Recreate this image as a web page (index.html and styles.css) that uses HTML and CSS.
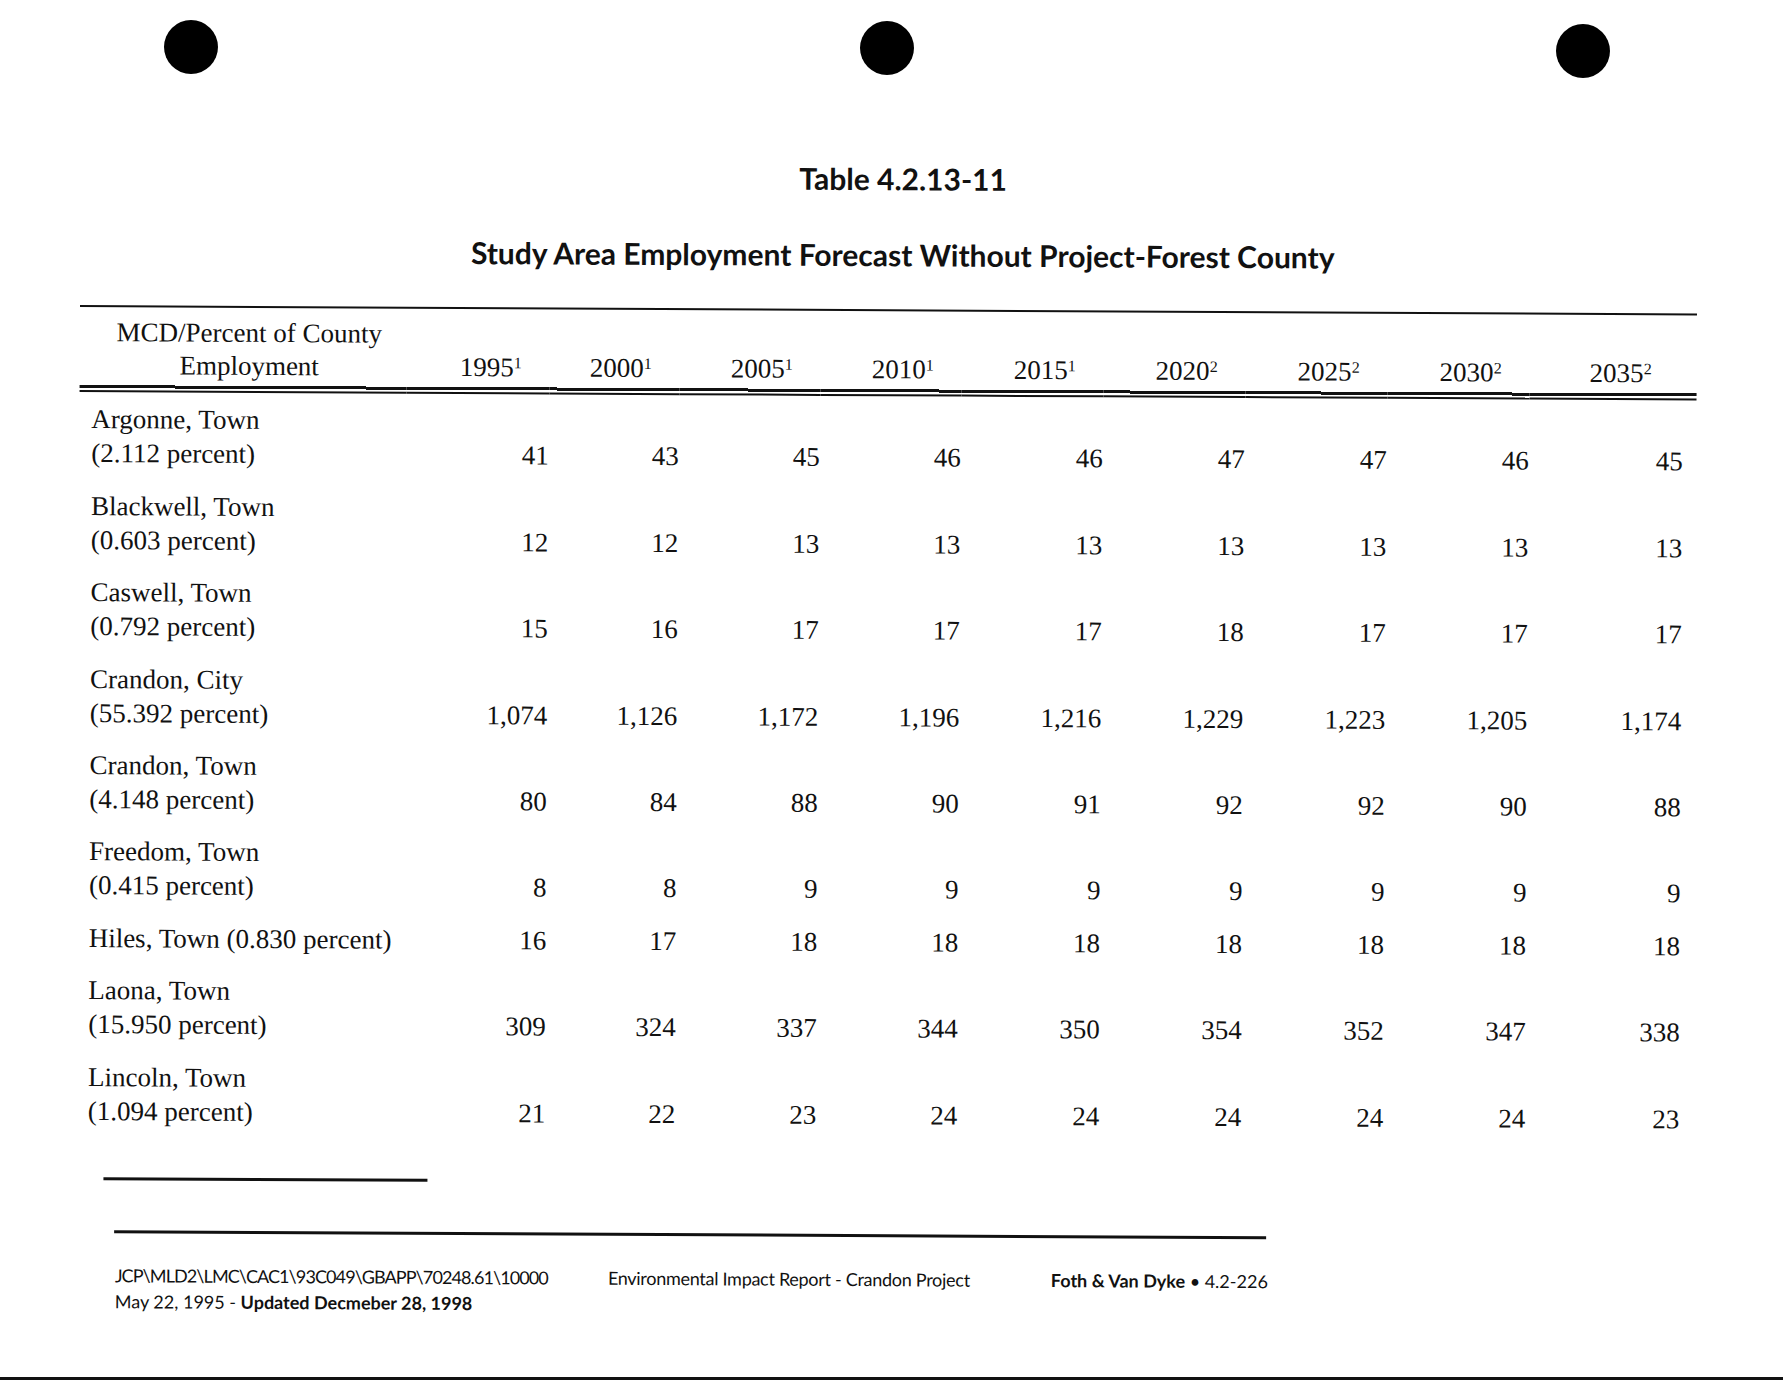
FILE: index.html
```html
<!DOCTYPE html>
<html lang="en">
<head>
<meta charset="utf-8">
<title>Table 4.2.13-11</title>
<link rel="stylesheet" href="styles.css">
</head>
<body>
<div class="holes"><span class="hole"></span><span class="hole"></span><span class="hole"></span></div>
<div class="sheet">
  <h1 class="title">Table 4.2.13-11</h1>
  <h2 class="subtitle">Study Area Employment Forecast Without Project-Forest County</h2>
  <table class="forecast">
    <colgroup>
      <col class="c-name"><col class="c-1"><col class="c-2"><col class="c-3"><col class="c-4"><col class="c-5"><col class="c-6"><col class="c-7"><col class="c-8"><col class="c-9">
    </colgroup>
    <thead>
      <tr>
        <th class="name-head">MCD/Percent of County<br>Employment</th>
        <th>1995<sup>1</sup></th><th>2000<sup>1</sup></th><th>2005<sup>1</sup></th><th>2010<sup>1</sup></th><th>2015<sup>1</sup></th><th>2020<sup>2</sup></th><th>2025<sup>2</sup></th><th>2030<sup>2</sup></th><th class="last">2035<sup>2</sup></th>
      </tr>
    </thead>
    <tbody>
      <tr><td class="name">Argonne, Town<br>(2.112 percent)</td><td>41</td><td>43</td><td>45</td><td>46</td><td>46</td><td>47</td><td>47</td><td>46</td><td class="last">45</td></tr>
      <tr><td class="name">Blackwell, Town<br>(0.603 percent)</td><td>12</td><td>12</td><td>13</td><td>13</td><td>13</td><td>13</td><td>13</td><td>13</td><td class="last">13</td></tr>
      <tr><td class="name">Caswell, Town<br>(0.792 percent)</td><td>15</td><td>16</td><td>17</td><td>17</td><td>17</td><td>18</td><td>17</td><td>17</td><td class="last">17</td></tr>
      <tr><td class="name">Crandon, City<br>(55.392 percent)</td><td>1,074</td><td>1,126</td><td>1,172</td><td>1,196</td><td>1,216</td><td>1,229</td><td>1,223</td><td>1,205</td><td class="last">1,174</td></tr>
      <tr><td class="name">Crandon, Town<br>(4.148 percent)</td><td>80</td><td>84</td><td>88</td><td>90</td><td>91</td><td>92</td><td>92</td><td>90</td><td class="last">88</td></tr>
      <tr><td class="name">Freedom, Town<br>(0.415 percent)</td><td>8</td><td>8</td><td>9</td><td>9</td><td>9</td><td>9</td><td>9</td><td>9</td><td class="last">9</td></tr>
      <tr><td class="name">Hiles, Town (0.830 percent)</td><td>16</td><td>17</td><td>18</td><td>18</td><td>18</td><td>18</td><td>18</td><td>18</td><td class="last">18</td></tr>
      <tr><td class="name">Laona, Town<br>(15.950 percent)</td><td>309</td><td>324</td><td>337</td><td>344</td><td>350</td><td>354</td><td>352</td><td>347</td><td class="last">338</td></tr>
      <tr><td class="name">Lincoln, Town<br>(1.094 percent)</td><td>21</td><td>22</td><td>23</td><td>24</td><td>24</td><td>24</td><td>24</td><td>24</td><td class="last">23</td></tr>
    </tbody>
  </table>
  <div class="rule-short"></div>
  <div class="rule-long"></div>
  <div class="footer">
    <div class="f-left"><span class="path">JCP\MLD2\LMC\CAC1\93C049\GBAPP\70248.61\10000</span><br>May 22, 1995 - <b>Updated Decmeber 28, 1998</b></div>
    <div class="f-mid">Environmental Impact Report - Crandon Project</div>
    <div class="f-right"><b>Foth &amp; Van Dyke</b> • 4.2-226</div>
  </div>
</div>
<div class="bottom-line"></div>
</body>
</html>
```

FILE: styles.css
```css
html, body {
  margin: 0;
  background: #fff;
  color: #111;
}
body {
  display: flex;
  flex-direction: column;
  min-height: 100vh;
  overflow: hidden;
}
.holes {
  display: flex;
  align-items: flex-start;
  gap: 642px;
  padding: 20px 0 0 164px;
  height: 74px;
  box-sizing: border-box;
}
.hole {
  flex: none;
  width: 54px;
  height: 54px;
  border-radius: 50%;
  background: #000;
}
.hole:nth-child(2) { margin-top: 1px; }
.hole:nth-child(3) { margin-top: 4px; }

.sheet {
  width: 1617px;
  padding: 83px 0 0 80px;
  transform: rotate(0.3deg);
  transform-origin: 80px 231px;
}
.title,
.subtitle {
  margin: 0;
  padding-left: 28px;
  text-align: center;
  font-family: Lato, "Open Sans", sans-serif;
  font-weight: 700;
  font-size: 30px;
  line-height: 34px;
}
.subtitle { margin-top: 42px; }

.forecast {
  margin-top: 38px;
  width: 1617px;
  table-layout: fixed;
  border-collapse: separate;
  border-spacing: 0;
  border-top: 2px solid #111;
  font-family: "Liberation Serif", "Times New Roman", serif;
  font-size: 27px;
  line-height: 34px;
}
.c-name { width: 327px; }
.c-1 { width: 142.5px; }
.c-2 { width: 130px; }
.c-3 { width: 141px; }
.c-4 { width: 141px; }
.c-5 { width: 142px; }
.c-6 { width: 142px; }
.c-7 { width: 142px; }
.c-8 { width: 142px; }
.c-9 { width: 167.5px; }

.forecast th {
  font-weight: 400;
  line-height: 33px;
  padding: 9px 27.5px 8px 0;
  text-align: right;
  vertical-align: bottom;
  white-space: nowrap;
  border-bottom: 2px solid #111;
  background: linear-gradient(to bottom, transparent calc(100% - 5px), #111 calc(100% - 5px), #111 calc(100% - 2px), transparent calc(100% - 2px));
}
.forecast th.name-head {
  text-align: center;
  padding-left: 12px;
  padding-right: 0;
}
.forecast th.last { padding-right: 45px; }
.forecast sup {
  font-size: 16px;
  line-height: 0;
  vertical-align: 8px;
}
.forecast td {
  padding: 10.4px 0 8px;
  text-align: right;
  vertical-align: bottom;
  white-space: nowrap;
}
.forecast td.name {
  text-align: left;
  padding-left: 12px;
}
.forecast td.last { padding-right: 13.5px; }

.rule-short {
  width: 324px;
  height: 3px;
  background: #111;
  margin: 41px 0 0 28px;
}
.rule-long {
  width: 1152px;
  height: 3px;
  background: #111;
  margin: 50px 0 0 39px;
}
.footer {
  display: flex;
  margin-top: 30.5px;
  padding-left: 40px;
  font-family: Lato, "Open Sans", sans-serif;
  font-size: 18px;
  line-height: 25.5px;
}
.f-left { width: 493px; flex: none; }
.f-left .path { letter-spacing: -0.9px; }
.f-mid { width: 443px; flex: none; letter-spacing: -0.28px; }
.f-right { flex: none; }
.bottom-line {
  margin-top: auto;
  height: 3px;
  background: #111;
}
```
